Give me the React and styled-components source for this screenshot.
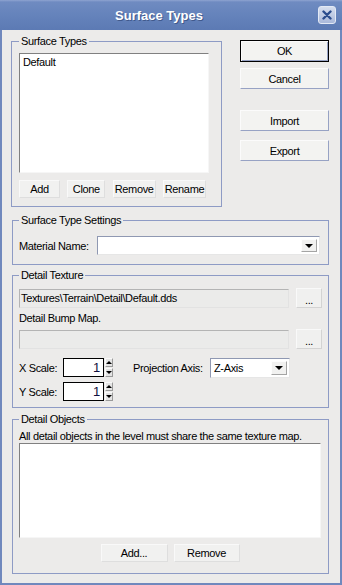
import styled, { createGlobalStyle } from "styled-components";

const GlobalStyle = createGlobalStyle`
  * {
    box-sizing: border-box;
  }
  html,
  body {
    margin: 0;
    padding: 0;
    background: #ecebea;
  }
  body {
    font-family: "Liberation Sans", Arial, sans-serif;
    font-size: 11px;
    letter-spacing: -0.35px;
    color: #000;
  }
`;

const App = () => {
  return (
    <>
      <GlobalStyle />
      <Window>
        <TitleBar>
          <Title>Surface Types</Title>
          <CloseButton aria-label="Close">
            <svg width="10" height="10" viewBox="0 0 10 10">
              <path
                d="M1.5 1.5 L8.5 8.5 M8.5 1.5 L1.5 8.5"
                stroke="#2b4d8e"
                strokeWidth="2.4"
                strokeLinecap="round"
              />
            </svg>
          </CloseButton>
        </TitleBar>

        <TopRow>
          <Group $w={211} $h={172} $pt={5} $pl={7}>
            <Legend>Surface Types</Legend>
            <ListBox $w={190} $h={120}>
              <ListItem>Default</ListItem>
            </ListBox>
            <ButtonRow $mt={7} $w={187} $justify="space-between">
              <Button $flat $w={41} $h={18}>Add</Button>
              <Button $flat $w={38} $h={18}>Clone</Button>
              <Button $flat $w={43} $h={18}>Remove</Button>
              <Button $flat $w={43} $h={18}>Rename</Button>
            </ButtonRow>
          </Group>

          <SideButtons>
            <Button $default $w={89} $h={22}>OK</Button>
            <Button $w={89} $h={21} $mt={6}>Cancel</Button>
            <Button $w={89} $h={21} $mt={21}>Import</Button>
            <Button $w={89} $h={21} $mt={9}>Export</Button>
          </SideButtons>
        </TopRow>

        <Group $w={317} $h={51} $pt={9} $pl={6} $mt={7} $ml={10}>
          <Legend>Surface Type Settings</Legend>
          <Row>
            <Label $w={78}>Material Name:</Label>
            <Combo $w={223} $h={19}>
              <ComboText />
              <ComboArrow />
            </Combo>
          </Row>
        </Group>

        <Group $w={317} $h={139} $pt={6} $pl={6} $mt={4} $ml={10}>
          <Legend>Detail Texture</Legend>
          <Row $gap={7}>
            <Field $w={270}>Textures\Terrain\Detail\Default.dds</Field>
            <Button $dots $w={26} $h={20}>...</Button>
          </Row>
          <TextLine $mt={4}>Detail Bump Map.</TextLine>
          <Row $gap={7} $mt={4}>
            <Field $w={270} />
            <Button $dots $w={26} $h={20}>...</Button>
          </Row>
          <Row $mt={9} $align="flex-start">
            <ScaleColumn>
              <Row>
                <Label $w={44}>X Scale:</Label>
                <SpinBox>1</SpinBox>
                <Spinner>
                  <SpinArrow $up />
                  <SpinArrow />
                </Spinner>
              </Row>
              <Row>
                <Label $w={44}>Y Scale:</Label>
                <SpinBox>1</SpinBox>
                <Spinner>
                  <SpinArrow $up />
                  <SpinArrow />
                </Spinner>
              </Row>
            </ScaleColumn>
            <Row $ml={20}>
              <Label $w={77}>Projection Axis:</Label>
              <Combo $w={80} $h={20}>
                <ComboText>Z-Axis</ComboText>
                <ComboArrow />
              </Combo>
            </Row>
          </Row>
        </Group>

        <Group $w={317} $h={161} $pt={4} $pl={6} $mt={5} $ml={10}>
          <Legend>Detail Objects</Legend>
          <TextLine>All detail objects in the level must share the same texture map.</TextLine>
          <ListBox $w={302} $h={95} />
          <ButtonRow $mt={6} $w={302} $justify="center" $gap={6}>
            <Button $flat $w={67} $h={18}>Add...</Button>
            <Button $flat $w={66} $h={18}>Remove</Button>
          </ButtonRow>
        </Group>
      </Window>
    </>
  );
};

export default App;

const Window = styled.div`
  width: 342px;
  height: 585px;
  display: flex;
  flex-direction: column;
  background: #ecebea;
  border: 2px solid #7088bd;
  border-top: none;
`;

const TitleBar = styled.div`
  height: 30px;
  margin: 0 -2px;
  padding-right: 6px;
  display: flex;
  align-items: center;
  background: linear-gradient(
    to bottom,
    #8ea4d0 0px,
    #6f8bc1 2px,
    #6583bb 50%,
    #5c7ab4 100%
  );
`;

const Title = styled.div`
  flex: 1;
  text-align: center;
  color: #fff;
  font-weight: bold;
  font-size: 13px;
  letter-spacing: 0;
  text-shadow: 1px 1px 0 #40598c;
`;

const CloseButton = styled.button`
  width: 18px;
  height: 18px;
  padding: 0;
  display: grid;
  place-items: center;
  border: 1px solid #e3e9f5;
  border-radius: 3px;
  background: linear-gradient(to bottom, #d6deee, #a9b8da);
`;

const TopRow = styled.div`
  display: flex;
  align-items: flex-start;
  gap: 18px;
  margin: 5px 0 0 9px;
`;

const SideButtons = styled.div`
  display: flex;
  flex-direction: column;
  padding-top: 5px;
`;

const Group = styled.fieldset`
  width: ${(p) => p.$w}px;
  height: ${(p) => p.$h}px;
  min-width: 0;
  margin: ${(p) => p.$mt ?? 0}px 0 0 ${(p) => p.$ml ?? 0}px;
  padding: ${(p) => p.$pt}px 0 0 ${(p) => p.$pl}px;
  border: 1px solid #8e9bc5;
`;

const Legend = styled.legend`
  padding: 0 2px;
  line-height: 13px;
  font-size: 11px;
`;

const ListBox = styled.div`
  width: ${(p) => p.$w}px;
  height: ${(p) => p.$h}px;
  padding: 1px 3px;
  background: #fff;
  border: 1px solid;
  border-color: #808080 #f6f6f6 #f6f6f6 #808080;
`;

const ListItem = styled.div`
  line-height: 14px;
`;

const ButtonRow = styled.div`
  width: ${(p) => p.$w}px;
  margin-top: ${(p) => p.$mt ?? 0}px;
  display: flex;
  justify-content: ${(p) => p.$justify};
  gap: ${(p) => p.$gap ?? 0}px;
`;

const Button = styled.button`
  width: ${(p) => p.$w}px;
  height: ${(p) => p.$h}px;
  margin-top: ${(p) => p.$mt ?? 0}px;
  padding: 0;
  font: inherit;
  font-size: 11px;
  letter-spacing: -0.35px;
  color: #000;
  background: #f3f3f1;
  border: 1px solid;
  border-color: #fbfbfb #97a2c4 #97a2c4 #fbfbfb;

  ${(p) =>
    p.$flat &&
    `
    background: #f1f1f0;
    border-color: #f9f9f9 #dedede #dedede #f9f9f9;
  `}

  ${(p) =>
    p.$dots &&
    `
    background: #f0f0ef;
    border-color: #f9f9f9 #d3d3d3 #d3d3d3 #f9f9f9;
    line-height: 22px;
  `}

  ${(p) =>
    p.$default &&
    `
    border-color: #000;
    box-shadow: inset 1px 1px 0 #fbfbfb, inset -1px -1px 0 #97a2c4;
  `}
`;

const Row = styled.div`
  display: flex;
  align-items: ${(p) => p.$align ?? "center"};
  gap: ${(p) => p.$gap ?? 0}px;
  margin-top: ${(p) => p.$mt ?? 0}px;
  margin-left: ${(p) => p.$ml ?? 0}px;
`;

const Label = styled.span`
  width: ${(p) => p.$w}px;
  flex: none;
  white-space: nowrap;
`;

const TextLine = styled.div`
  margin-top: ${(p) => p.$mt ?? 0}px;
  line-height: 13px;
  white-space: nowrap;
`;

const Field = styled.div`
  width: ${(p) => p.$w}px;
  height: 19px;
  padding: 0 1px;
  line-height: 17px;
  white-space: nowrap;
  background: #ebebea;
  border: 1px solid;
  border-color: #b4b4b4 #e2e2e2 #e2e2e2 #b4b4b4;
`;

const Combo = styled.div`
  width: ${(p) => p.$w}px;
  height: ${(p) => p.$h}px;
  padding: 2px;
  display: flex;
  align-items: center;
  justify-content: space-between;
  background: #fff;
  border: 1px solid;
  border-color: #8f98b2 #e6e6e6 #e6e6e6 #8f98b2;
`;

const ComboText = styled.span`
  padding-left: 1px;
`;

const ComboArrow = styled.span`
  width: 16px;
  align-self: stretch;
  display: grid;
  place-items: center;
  background: #f1f1f0;
  border: 1px solid;
  border-color: #fdfdfd #a4a4a4 #a4a4a4 #fdfdfd;

  &::after {
    content: "";
    border-left: 4px solid transparent;
    border-right: 4px solid transparent;
    border-top: 4px solid #000;
  }
`;

const ScaleColumn = styled.div`
  display: flex;
  flex-direction: column;
  gap: 5px;
`;

const SpinBox = styled.div`
  width: 41px;
  height: 19px;
  padding-right: 3px;
  text-align: right;
  font-size: 13px;
  line-height: 17px;
  color: #101040;
  background: #fff;
  border: 1px solid #000;
`;

const Spinner = styled.div`
  margin-left: 1px;
  display: flex;
  flex-direction: column;
  gap: 1px;
`;

const SpinArrow = styled.span`
  width: 8px;
  height: 9px;
  display: grid;
  place-items: center;
  background: #e4e4e4;
  border: 1px solid;
  border-color: #fafafa #9a9a9a #9a9a9a #fafafa;

  &::after {
    content: "";
    border-left: 3px solid transparent;
    border-right: 3px solid transparent;
    ${(p) =>
      p.$up ? "border-bottom: 3px solid #000;" : "border-top: 3px solid #000;"}
  }
`;
